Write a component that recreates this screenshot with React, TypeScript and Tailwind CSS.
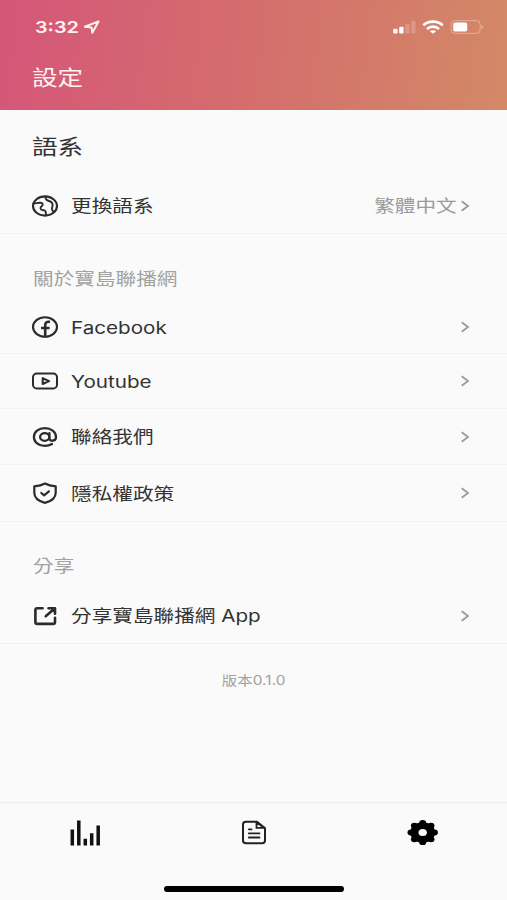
import React from 'react';

interface SettingRow {
  id: string;
  label: string;
  icon: React.ReactNode;
  value?: string;
  height: string;
}

const iconProps = {
  viewBox: '0 0 28 24',
  className: 'h-6 w-7 shrink-0',
  fill: 'none',
  stroke: '#2b2b2b',
  strokeWidth: 2.3,
  strokeLinecap: 'round' as const,
  strokeLinejoin: 'round' as const,
};

const GlobeIcon = () => (
  <svg {...iconProps} strokeWidth={2.1}>
    <ellipse cx="14" cy="12" rx="12" ry="9.6" />
    <path d="M2.500 9.500C5 9.500 7 8.500 9.500 8.800C12.300 9.200 12.300 11 10.600 12.300C8.800 13.700 9.300 15.900 11.500 16C14.200 16.100 15.200 17 14.900 20.800" strokeWidth="1.900" />
    <path d="M14.300 2.700C14.300 5 15.500 6.300 18 7C20.500 7.700 21.700 9.300 21.600 11.500C21.500 13 20.600 13.800 21 15.300C21.300 16.300 22 16.500 22.300 17.800" strokeWidth="1.900" />
  </svg>
);

const FacebookIcon = () => (
  <svg {...iconProps}>
    <ellipse cx="14" cy="12" rx="12" ry="9.700" strokeWidth="2.100" />
    <path d="M14.200 21.300V10c0-2.600 1.500-3.500 4.800-3.100M10 13h8.600" strokeWidth="2.600" strokeLinecap="butt" />
  </svg>
);

const YoutubeIcon = () => (
  <svg {...iconProps}>
    <rect x="2" y="4.500" width="24" height="15" rx="3.800" strokeWidth="2" />
    <path d="M11.700 9.200v5.800l6.400-2.900z" strokeWidth="2.100" />
  </svg>
);

const AtIcon = () => (
  <svg {...iconProps}>
    <ellipse cx="13.700" cy="12" rx="4.600" ry="3.800" />
    <path d="M18.400 8.100v5.200c0 3.500 6.600 3.400 6.600-1.300 0-5-5-8.900-11.200-8.900S2.900 7 2.900 12s4.800 8.900 10.900 8.900c2.900 0 5.200-.7 7.200-1.900" />
  </svg>
);

const ShieldIcon = () => (
  <svg {...iconProps} strokeWidth={2.200}>
    <path d="M14 2.500c3.300 1.800 6.700 2.500 10.700 2.900v6.300c0 5.300-4.500 8.500-10.700 10.200C7.800 20.200 3.300 17 3.300 11.700V5.400C7.300 5 10.700 4.300 14 2.500z" />
    <path d="m10.300 12 2.800 2.300 4.800-4" />
  </svg>
);

const ShareIcon = () => (
  <svg {...iconProps} strokeWidth={2.600}>
    <path d="M11.600 4.200H6.200c-1.200 0-1.800.6-1.800 1.600v12.500c0 1 .6 1.600 1.800 1.600h16c1.200 0 1.800-.6 1.800-1.600v-4.500" />
    <path d="M17.500 4.200H24v5.600M23.600 4.600l-8.900 7.600" />
  </svg>
);

const Chevron = () => (
  <svg viewBox="0 0 10 12" className="h-3 w-2.5 shrink-0" fill="none" stroke="#999" strokeWidth="1.700">
    <path d="m1.700 1.200 6.300 4.800-6.300 4.800" />
  </svg>
);

const languageRows: SettingRow[] = [
  { id: 'lang', label: '更換語系', icon: <GlobeIcon />, value: '繁體中文', height: 'h-[57px] pt-px' },
];

const aboutRows: SettingRow[] = [
  { id: 'facebook', label: 'Facebook', icon: <FacebookIcon />, height: 'h-[54px] pt-px' },
  { id: 'youtube', label: 'Youtube', icon: <YoutubeIcon />, height: 'h-[55px]' },
  { id: 'contact', label: '聯絡我們', icon: <AtIcon />, height: 'h-14' },
  { id: 'privacy', label: '隱私權政策', icon: <ShieldIcon />, height: 'h-[57px]' },
];

const shareRows: SettingRow[] = [
  { id: 'share', label: '分享寶島聯播網 App', icon: <ShareIcon />, height: 'h-14' },
];

function Row({ row }: { row: SettingRow }) {
  return (
    <div className={`flex items-center border-b border-[#f1f1f1] pr-[37px] pl-[31px] ${row.height}`}>
      {row.icon}
      <span className="ml-3 origin-left scale-x-[1.2] pt-px text-[17.2px] leading-6 whitespace-nowrap text-[#333]">
        {row.label}
      </span>
      <div className="ml-auto flex items-center gap-[3px]">
        {row.value && (
          <span className="origin-right scale-x-[1.2] pt-px text-[17.2px] leading-6 text-[#9a9a9a]">{row.value}</span>
        )}
        <Chevron />
      </div>
    </div>
  );
}

function SectionLabel({ children }: { children: React.ReactNode }) {
  return (
    <p className="w-fit origin-left scale-x-[1.2] text-[17.2px] leading-6 text-[#a2a2a2]">{children}</p>
  );
}

function StatusBar() {
  return (
    <div className="flex h-[54px] items-center pr-[23px] pl-[35px] text-[#fff3ee]">
      <span className="w-9 origin-left scale-x-[1.2] text-[16.5px] leading-6 font-semibold">3:32</span>
      <svg viewBox="0 0 18 14" className="ml-3 h-3.5 w-[18px]" fill="none" stroke="currentColor" strokeWidth="2" strokeLinejoin="round">
        <path d="M15.500 1.400 1.800 6.700l6.700.8.8 5.200z" />
      </svg>
      <div className="ml-auto flex items-center">
        <svg viewBox="0 0 24 14" className="h-3.5 w-6" fill="#fff">
          <rect x="0.200" y="8.700" width="4.400" height="4.800" rx="1.200" />
          <rect x="6.200" y="6.700" width="4.400" height="6.800" rx="1.200" />
          <rect x="12.200" y="4" width="4.400" height="9.500" rx="1.200" opacity="0.2" />
          <rect x="18.200" y="1" width="4.400" height="12.500" rx="1.200" opacity="0.2" />
        </svg>
        <svg viewBox="0 0 22 14" className="ml-[5px] h-3.5 w-[22px]" fill="none" stroke="#fff" strokeWidth="2.600">
          <path d="M1.300 5.300c5.300-4.900 14.100-4.900 19.400 0M4.900 8.900c3.500-3 8.700-3 12.200 0" />
          <path d="M7.900 11.300c1.900-1.500 4.300-1.500 6.200 0L11 13.800z" fill="#fff" stroke="none" />
        </svg>
        <svg viewBox="0 0 34 14" className="ml-1.5 h-3.5 w-[34px]" fill="none">
          <rect x="1.200" y="0.700" width="29" height="12.600" rx="3.500" stroke="#fff" strokeOpacity="0.35" />
          <rect x="3.200" y="2.400" width="14" height="9.200" rx="1.800" fill="#fff" />
          <path d="M31.600 5v4c1.600-.6 1.600-3.400 0-4z" fill="#fff" fillOpacity="0.5" />
        </svg>
      </div>
    </div>
  );
}

function TabBar() {
  return (
    <nav className="flex h-[98px] flex-col items-center border-t border-[#eeeeee]">
      <div className="grid h-[60px] w-full grid-cols-3 place-items-center">
        <svg viewBox="0 0 32 28" className="h-7 w-8" stroke="#111" strokeWidth="3.500">
          <path d="M3.300 10.500v16M9.800 1.500v25M16.300 19.700v6.800M22.700 14.200v12.300M29.200 6.500v20" />
        </svg>
        <svg viewBox="0 0 26 26" className="h-[26px] w-[26px]" fill="none" stroke="#222" strokeWidth="2" strokeLinejoin="round" strokeLinecap="round">
          <path d="M16 1.700H5C3 1.700 2 2.700 2 4.400v16c0 1.900 1 2.800 3 2.800h16c2 0 3-1 3-2.700V8.200z" />
          <path d="M15.500 2.200v5.700h8L15.500 2.200M7.800 9.300h2.800M7.800 13.400h10.700M7.800 17.500h10.700" strokeWidth="1.800" />
        </svg>
        <svg viewBox="0 0 32 26" className="h-[26px] w-8" fill="#000">
          <ellipse cx="15.700" cy="12.500" rx="12.400" ry="10.300" />
          <ellipse cx="15.700" cy="2.900" rx="3.500" ry="2.900" />
          <ellipse cx="15.700" cy="22.200" rx="3.500" ry="2.900" />
          <ellipse cx="4" cy="12.500" rx="3.500" ry="2.900" />
          <ellipse cx="27.400" cy="12.500" rx="3.500" ry="2.900" />
          <ellipse cx="7.400" cy="5.700" rx="3.500" ry="2.900" />
          <ellipse cx="24" cy="5.700" rx="3.500" ry="2.900" />
          <ellipse cx="7.400" cy="19.300" rx="3.500" ry="2.900" />
          <ellipse cx="24" cy="19.300" rx="3.500" ry="2.900" />
          <ellipse cx="15.700" cy="12.500" rx="4.200" ry="3.500" fill="#fafafa" />
        </svg>
      </div>
      <div className="mt-[23px] ml-px h-[5.500px] w-[180px] rounded-full bg-black" />
    </nav>
  );
}

export default function App() {
  return (
    <div className="flex h-[900px] w-[507px] flex-col overflow-hidden bg-[#fafafa] font-['Inter','Noto_Sans_CJK_TC',sans-serif]">
      <header className="h-[110px] bg-[linear-gradient(97deg,#d55679_0%,#d46d6d_48%,#d38967_100%)]">
        <StatusBar />
        <h1 className="mt-[9px] ml-8 w-fit origin-left scale-x-[1.22] text-[21px] leading-[30px] text-[#fff3ee]">設定</h1>
      </header>

      <main className="flex-1">
        <h2 className="mt-[22px] ml-8 w-fit origin-left scale-x-[1.22] text-[21px] leading-[30px] text-[#333]">語系</h2>
        <div className="mt-[15px]">
          {languageRows.map((row) => (
            <Row key={row.id} row={row} />
          ))}
        </div>

        <section className="mt-[33px]">
          <div className="mb-[9px] pl-[32.500px]">
            <SectionLabel>關於寶島聯播網</SectionLabel>
          </div>
          {aboutRows.map((row) => (
            <Row key={row.id} row={row} />
          ))}
        </section>

        <section className="mt-8">
          <div className="mb-2.5 pl-[32.500px]">
            <SectionLabel>分享</SectionLabel>
          </div>
          {shareRows.map((row) => (
            <Row key={row.id} row={row} />
          ))}
        </section>

        <p className="mt-[27px] text-center text-[12.8px] leading-5 text-[#a0a0a0]">
          <span className="inline-block scale-x-[1.2] tracking-[0.1px]">版本0.1.0</span>
        </p>
      </main>

      <TabBar />
    </div>
  );
}
